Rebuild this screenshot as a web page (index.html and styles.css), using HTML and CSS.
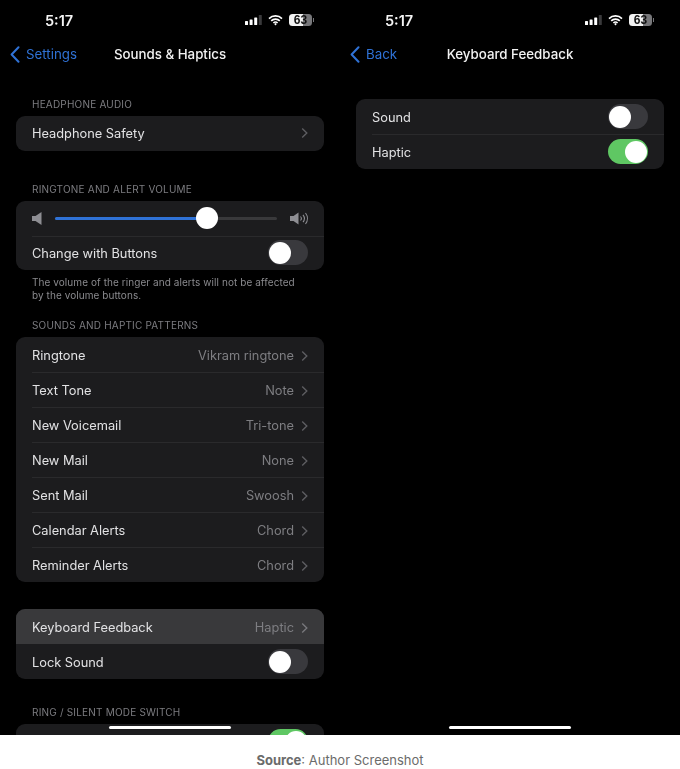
FILE: index.html
```html
<!DOCTYPE html>
<html>
<head>
    <title>Sounds and Keyboard Feedback</title>
    <link rel="stylesheet" href="styles.css">
</head>
<body>
    <div class="shots">
        <!-- left phone -->
        <div class="screen">
            <div class="status">
                <span class="time">5:17</span>
                <div class="status-icons">
                    <svg width="17" height="10" viewBox="0 0 17 10"><rect x="0" y="6" width="3" height="4" rx=".6" fill="#fff"/><rect x="4.6" y="4.4" width="3" height="5.6" rx=".6" fill="#fff"/><rect x="9.2" y="2.4" width="3" height="7.6" rx=".6" fill="#fff"/><rect x="13.8" y="0" width="3" height="10" rx=".6" fill="#3a3a3c"/></svg>
                    <svg width="15" height="11" viewBox="0 0 15 11"><path d="M1 3.6a9.2 9.2 0 0 1 13 0M3.2 5.9a6 6 0 0 1 8.6 0M5.4 8a3 3 0 0 1 4.2 0" fill="none" stroke="#fff" stroke-width="1.6"/><path d="M6.2 9l1.3-.9 1.3.9-1.3 1.6z" fill="#fff"/></svg>
                    <div class="battery"><span class="battery-num">63</span></div>
                    <span class="battery-tip"></span>
                </div>
            </div>
            <div class="nav">
                <div class="back">
                    <svg width="10" height="17" viewBox="0 0 10 17"><path d="M8.5 1.2L1.6 8.5l6.9 7.3" fill="none" stroke="#2f72d6" stroke-width="2" stroke-linecap="round" stroke-linejoin="round"/></svg>
                    <span>Settings</span>
                </div>
                <div class="nav-title">Sounds &amp; Haptics</div>
                <div></div>
            </div>

            <div class="label">HEADPHONE AUDIO</div>
            <div class="card card-tight">
                <div class="row row-first"><span>Headphone Safety</span><span class="value"><svg class="chev" width="7" height="12" viewBox="0 0 7 12"><path d="M1.2 1.5L5.8 6l-4.6 4.5" fill="none" stroke="#5c5c60" stroke-width="1.4"/></svg></span></div>
            </div>

            <div class="label section">RINGTONE AND ALERT VOLUME</div>
            <div class="card card-tight">
                <div class="row slider-row">
                    <svg width="10" height="13" viewBox="0 0 10 13"><path d="M0 4h3.5L9.5 0v13L3.5 9H0z" fill="#8e8e93"/></svg>
                    <div class="track"><div class="fill"></div><div class="thumb"></div></div>
                    <svg width="19" height="13" viewBox="0 0 19 13"><path d="M0 4h3.5L8.5 .5v12L3.5 9H0z" fill="#8e8e93"/><path d="M10.5 4.5a3 3 0 0 1 0 4M13 2.8a6 6 0 0 1 0 7.4M15.5 1a9 9 0 0 1 0 11" fill="none" stroke="#8e8e93" stroke-width="1.1"/></svg>
                </div>
                <div class="row"><span>Change with Buttons</span><div class="toggle"></div></div>
            </div>
            <div class="note">The volume of the ringer and alerts will not be affected<br>by the volume buttons.</div>

            <div class="label note-next">SOUNDS AND HAPTIC PATTERNS</div>
            <div class="card">
                <div class="row"><span>Ringtone</span><span class="value">Vikram ringtone<svg class="chev" width="7" height="12" viewBox="0 0 7 12"><path d="M1.2 1.5L5.8 6l-4.6 4.5" fill="none" stroke="#5c5c60" stroke-width="1.4"/></svg></span></div>
                <div class="row"><span>Text Tone</span><span class="value">Note<svg class="chev" width="7" height="12" viewBox="0 0 7 12"><path d="M1.2 1.5L5.8 6l-4.6 4.5" fill="none" stroke="#5c5c60" stroke-width="1.4"/></svg></span></div>
                <div class="row"><span>New Voicemail</span><span class="value">Tri-tone<svg class="chev" width="7" height="12" viewBox="0 0 7 12"><path d="M1.2 1.5L5.8 6l-4.6 4.5" fill="none" stroke="#5c5c60" stroke-width="1.4"/></svg></span></div>
                <div class="row"><span>New Mail</span><span class="value">None<svg class="chev" width="7" height="12" viewBox="0 0 7 12"><path d="M1.2 1.5L5.8 6l-4.6 4.5" fill="none" stroke="#5c5c60" stroke-width="1.4"/></svg></span></div>
                <div class="row"><span>Sent Mail</span><span class="value">Swoosh<svg class="chev" width="7" height="12" viewBox="0 0 7 12"><path d="M1.2 1.5L5.8 6l-4.6 4.5" fill="none" stroke="#5c5c60" stroke-width="1.4"/></svg></span></div>
                <div class="row"><span>Calendar Alerts</span><span class="value">Chord<svg class="chev" width="7" height="12" viewBox="0 0 7 12"><path d="M1.2 1.5L5.8 6l-4.6 4.5" fill="none" stroke="#5c5c60" stroke-width="1.4"/></svg></span></div>
                <div class="row"><span>Reminder Alerts</span><span class="value">Chord<svg class="chev" width="7" height="12" viewBox="0 0 7 12"><path d="M1.2 1.5L5.8 6l-4.6 4.5" fill="none" stroke="#5c5c60" stroke-width="1.4"/></svg></span></div>
            </div>

            <div class="card keyboard-card">
                <div class="row row-active"><span>Keyboard Feedback</span><span class="value">Haptic<svg class="chev" width="7" height="12" viewBox="0 0 7 12"><path d="M1.2 1.5L5.8 6l-4.6 4.5" fill="none" stroke="#77777b" stroke-width="1.4"/></svg></span></div>
                <div class="row row-plain"><span>Lock Sound</span><div class="toggle"></div></div>
            </div>

            <div class="label ring-label">RING / SILENT MODE SWITCH</div>
            <div class="card">
                <div class="row"><span></span><div class="toggle toggle-on"></div></div>
            </div>
            <div class="home-bar"></div>
        </div>

        <!-- right phone -->
        <div class="screen">
            <div class="status">
                <span class="time">5:17</span>
                <div class="status-icons">
                    <svg width="17" height="10" viewBox="0 0 17 10"><rect x="0" y="6" width="3" height="4" rx=".6" fill="#fff"/><rect x="4.6" y="4.4" width="3" height="5.6" rx=".6" fill="#fff"/><rect x="9.2" y="2.4" width="3" height="7.6" rx=".6" fill="#fff"/><rect x="13.8" y="0" width="3" height="10" rx=".6" fill="#3a3a3c"/></svg>
                    <svg width="15" height="11" viewBox="0 0 15 11"><path d="M1 3.6a9.2 9.2 0 0 1 13 0M3.2 5.9a6 6 0 0 1 8.6 0M5.4 8a3 3 0 0 1 4.2 0" fill="none" stroke="#fff" stroke-width="1.6"/><path d="M6.2 9l1.3-.9 1.3.9-1.3 1.6z" fill="#fff"/></svg>
                    <div class="battery"><span class="battery-num">63</span></div>
                    <span class="battery-tip"></span>
                </div>
            </div>
            <div class="nav">
                <div class="back">
                    <svg width="10" height="17" viewBox="0 0 10 17"><path d="M8.5 1.2L1.6 8.5l6.9 7.3" fill="none" stroke="#2f72d6" stroke-width="2" stroke-linecap="round" stroke-linejoin="round"/></svg>
                    <span>Back</span>
                </div>
                <div class="nav-title">Keyboard Feedback</div>
                <div></div>
            </div>
            <div class="card feedback-card">
                <div class="row"><span>Sound</span><div class="toggle"></div></div>
                <div class="row"><span>Haptic</span><div class="toggle toggle-on"></div></div>
            </div>
            <div class="home-bar"></div>
        </div>
    </div>
    <p class="source"><b>Source</b>: Author Screenshot</p>
</body>
</html>
```
FILE: styles.css
```css
body {
    margin: 0;
    background-color: #fff;
    font-family: Inter, "Liberation Sans", sans-serif;
}

.shots {
    display: flex;
    height: 735px;
    background-color: #000;
}

.screen {
    position: relative;
    width: 340px;
    height: 735px;
    overflow: hidden;
    padding: 0 16px;
    box-sizing: border-box;
    background-color: #000;
    color: #e2e2e4;
    filter: blur(0.35px);
}

.status {
    display: flex;
    justify-content: space-between;
    align-items: center;
    height: 40px;
    padding: 0 10px 0 29px;
}

.time {
    font-size: 14.5px;
    font-weight: 600;
    color: #f4f4f4;
}

.status-icons {
    display: flex;
    align-items: center;
    gap: 6px;
}

.battery {
    width: 23px;
    height: 12px;
    border-radius: 3.5px;
    background: linear-gradient(90deg, #f2f2f2 63%, #77777a 63%);
    text-align: center;
}

.battery-num {
    display: block;
    font-family: "Liberation Sans", sans-serif;
    font-size: 12px;
    font-weight: 700;
    line-height: 12px;
    color: #111;
}

.battery-tip {
    width: 1px;
    height: 4px;
    margin-left: -5px;
    background-color: #77777a;
}

.nav {
    display: grid;
    grid-template-columns: 1fr auto 1fr;
    align-items: center;
    height: 28px;
    margin: 0 -6px 30px;
    font-size: 13.3px;
}

.back {
    display: flex;
    align-items: center;
    gap: 6px;
    color: #2f72d6;
}

.nav-title {
    font-weight: 500;
    color: #f2f2f2;
}

.label {
    height: 12px;
    margin-bottom: 6px;
    padding-left: 16px;
    font-size: 10px;
    line-height: 12px;
    letter-spacing: 0.2px;
    color: #7c7c80;
}

.section {
    margin-top: 32.5px;
}

.note-next {
    margin-top: 17px;
}

.ring-label {
    margin-top: 27px;
}

.card {
    border-radius: 9px;
    overflow: hidden;
    background-color: #1c1c1e;
}

.keyboard-card {
    margin-top: 27px;
}

.feedback-card {
    margin-top: 31px;
}

.row {
    position: relative;
    display: flex;
    justify-content: space-between;
    align-items: center;
    height: 35px;
    padding: 0 16px;
    box-sizing: border-box;
    font-size: 12.8px;
}

.row > span {
    padding-top: 2px;
}

.card-tight .row {
    height: 34.5px;
}

.row-first > span {
    padding-top: 0;
}

/* hairline starts at the text, not the card edge */
.row + .row::before {
    content: "";
    position: absolute;
    top: 0;
    left: 16px;
    right: 0;
    height: 1px;
    background-color: #2a2a2c;
}

.row-active {
    background-color: #39393b;
}

.row-plain::before {
    display: none;
}

.value {
    display: flex;
    align-items: center;
    gap: 7px;
    color: #7e7e82;
}

.slider-row {
    gap: 13px;
    padding-right: 15px;
}

.track {
    position: relative;
    flex: 1;
    height: 3px;
    border-radius: 2px;
    background-color: #39393b;
}

.fill {
    width: 68%;
    height: 3px;
    border-radius: 2px;
    background-color: #2f72d6;
}

.thumb {
    position: absolute;
    top: -10px;
    left: 141px;
    width: 22px;
    height: 22px;
    border-radius: 50%;
    background-color: #fff;
}

.toggle {
    position: relative;
    width: 40px;
    height: 25px;
    border-radius: 13px;
    background-color: #39393d;
}

.toggle::after {
    content: "";
    position: absolute;
    top: 1.5px;
    left: 1px;
    width: 22px;
    height: 22px;
    border-radius: 50%;
    background-color: #fff;
}

.toggle-on {
    background-color: #5fc763;
}

.toggle-on::after {
    left: 17px;
}

.note {
    margin-top: 6px;
    padding-left: 16px;
    font-size: 10px;
    line-height: 13px;
    letter-spacing: 0.07px;
    color: #8a8a8e;
}

.home-bar {
    position: absolute;
    left: 109px;
    bottom: 6px;
    width: 122px;
    height: 3.5px;
    border-radius: 2px;
    background-color: #fff;
}

.source {
    margin: 17px 0 0;
    text-align: center;
    font-size: 13px;
    line-height: 16px;
    color: #6b6b6b;
}
```
